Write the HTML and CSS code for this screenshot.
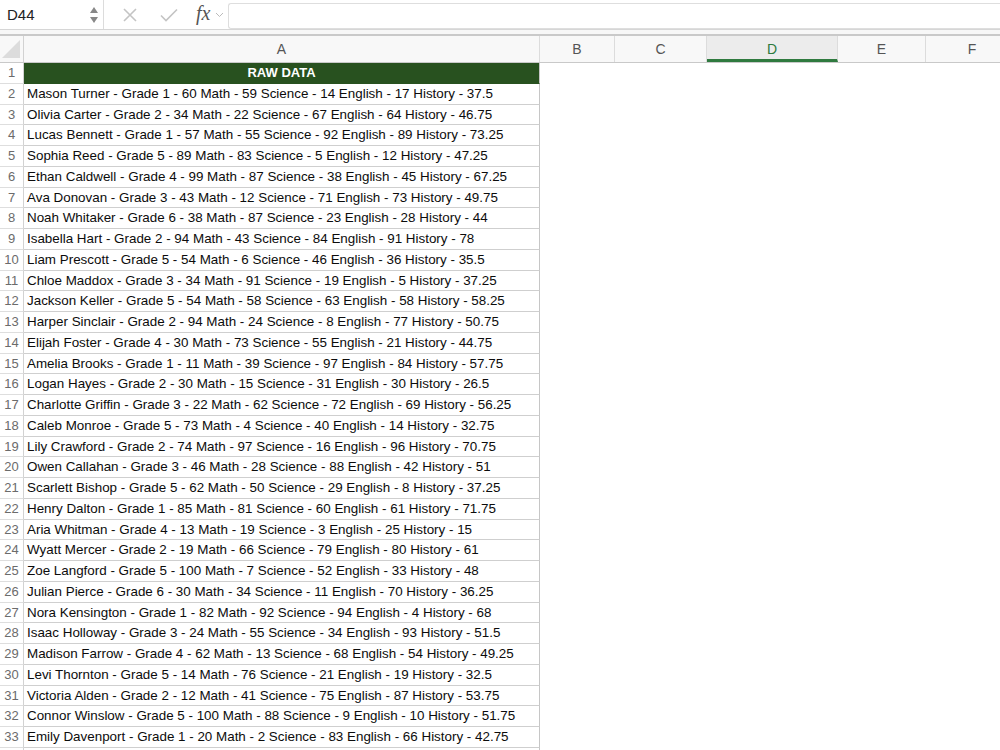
FILE: index.html
```html
<!DOCTYPE html>
<html lang="en">
<head>
<meta charset="UTF-8">
<title>RAW DATA - Sheet</title>
<link rel="stylesheet" href="styles.css">
</head>
<body>
<div class="formula-bar">
  <div class="name-box">
    <span class="name-text">D44</span>
    <span class="spinner">
      <svg width="10" height="22" viewBox="0 0 10 22"><path d="M5 3 L9 9 L1 9 Z" fill="#888"/><path d="M5 19 L9 13 L1 13 Z" fill="#888"/></svg>
    </span>
  </div>
  <div class="fx-tools">
    <svg class="tool" width="16" height="16" viewBox="0 0 16 16"><path d="M2 2 L14 14 M14 2 L2 14" stroke="#c4c4c4" stroke-width="1.6" fill="none"/></svg>
    <svg class="tool" width="18" height="16" viewBox="0 0 18 16"><path d="M1 8.5 L6 13.5 L17 2.5" stroke="#c4c4c4" stroke-width="1.6" fill="none"/></svg>
    <span class="fx">fx</span>
    <svg class="chev" width="9" height="6" viewBox="0 0 9 6"><path d="M1 1 L4.5 4.5 L8 1" stroke="#bbb" stroke-width="1" fill="none"/></svg>
  </div>
  <div class="formula-input"></div>
</div>
<div class="bar-gap"></div>

<div class="sheet">
  <div class="row col-heads">
    <div class="rh corner"><span class="tri"></span></div>
    <div class="ch col-a">A</div>
    <div class="ch col-b">B</div>
    <div class="ch col-c">C</div>
    <div class="ch col-d active">D</div>
    <div class="ch col-e">E</div>
    <div class="ch col-f">F</div>
  </div>
  <div class="row"><div class="rh">1</div><div class="cell col-a title">RAW DATA</div><div class="rest"></div></div>
  <div class="row"><div class="rh">2</div><div class="cell col-a">Mason Turner - Grade 1 - 60 Math - 59 Science - 14 English - 17 History - 37.5</div><div class="rest"></div></div>
  <div class="row"><div class="rh">3</div><div class="cell col-a">Olivia Carter - Grade 2 - 34 Math - 22 Science - 67 English - 64 History - 46.75</div><div class="rest"></div></div>
  <div class="row"><div class="rh">4</div><div class="cell col-a">Lucas Bennett - Grade 1 - 57 Math - 55 Science - 92 English - 89 History - 73.25</div><div class="rest"></div></div>
  <div class="row"><div class="rh">5</div><div class="cell col-a">Sophia Reed - Grade 5 - 89 Math - 83 Science - 5 English - 12 History - 47.25</div><div class="rest"></div></div>
  <div class="row"><div class="rh">6</div><div class="cell col-a">Ethan Caldwell - Grade 4 - 99 Math - 87 Science - 38 English - 45 History - 67.25</div><div class="rest"></div></div>
  <div class="row"><div class="rh">7</div><div class="cell col-a">Ava Donovan - Grade 3 - 43 Math - 12 Science - 71 English - 73 History - 49.75</div><div class="rest"></div></div>
  <div class="row"><div class="rh">8</div><div class="cell col-a">Noah Whitaker - Grade 6 - 38 Math - 87 Science - 23 English - 28 History - 44</div><div class="rest"></div></div>
  <div class="row"><div class="rh">9</div><div class="cell col-a">Isabella Hart - Grade 2 - 94 Math - 43 Science - 84 English - 91 History - 78</div><div class="rest"></div></div>
  <div class="row"><div class="rh">10</div><div class="cell col-a">Liam Prescott - Grade 5 - 54 Math - 6 Science - 46 English - 36 History - 35.5</div><div class="rest"></div></div>
  <div class="row"><div class="rh">11</div><div class="cell col-a">Chloe Maddox - Grade 3 - 34 Math - 91 Science - 19 English - 5 History - 37.25</div><div class="rest"></div></div>
  <div class="row"><div class="rh">12</div><div class="cell col-a">Jackson Keller - Grade 5 - 54 Math - 58 Science - 63 English - 58 History - 58.25</div><div class="rest"></div></div>
  <div class="row"><div class="rh">13</div><div class="cell col-a">Harper Sinclair - Grade 2 - 94 Math - 24 Science - 8 English - 77 History - 50.75</div><div class="rest"></div></div>
  <div class="row"><div class="rh">14</div><div class="cell col-a">Elijah Foster - Grade 4 - 30 Math - 73 Science - 55 English - 21 History - 44.75</div><div class="rest"></div></div>
  <div class="row"><div class="rh">15</div><div class="cell col-a">Amelia Brooks - Grade 1 - 11 Math - 39 Science - 97 English - 84 History - 57.75</div><div class="rest"></div></div>
  <div class="row"><div class="rh">16</div><div class="cell col-a">Logan Hayes - Grade 2 - 30 Math - 15 Science - 31 English - 30 History - 26.5</div><div class="rest"></div></div>
  <div class="row"><div class="rh">17</div><div class="cell col-a">Charlotte Griffin - Grade 3 - 22 Math - 62 Science - 72 English - 69 History - 56.25</div><div class="rest"></div></div>
  <div class="row"><div class="rh">18</div><div class="cell col-a">Caleb Monroe - Grade 5 - 73 Math - 4 Science - 40 English - 14 History - 32.75</div><div class="rest"></div></div>
  <div class="row"><div class="rh">19</div><div class="cell col-a">Lily Crawford - Grade 2 - 74 Math - 97 Science - 16 English - 96 History - 70.75</div><div class="rest"></div></div>
  <div class="row"><div class="rh">20</div><div class="cell col-a">Owen Callahan - Grade 3 - 46 Math - 28 Science - 88 English - 42 History - 51</div><div class="rest"></div></div>
  <div class="row"><div class="rh">21</div><div class="cell col-a">Scarlett Bishop - Grade 5 - 62 Math - 50 Science - 29 English - 8 History - 37.25</div><div class="rest"></div></div>
  <div class="row"><div class="rh">22</div><div class="cell col-a">Henry Dalton - Grade 1 - 85 Math - 81 Science - 60 English - 61 History - 71.75</div><div class="rest"></div></div>
  <div class="row"><div class="rh">23</div><div class="cell col-a">Aria Whitman - Grade 4 - 13 Math - 19 Science - 3 English - 25 History - 15</div><div class="rest"></div></div>
  <div class="row"><div class="rh">24</div><div class="cell col-a">Wyatt Mercer - Grade 2 - 19 Math - 66 Science - 79 English - 80 History - 61</div><div class="rest"></div></div>
  <div class="row"><div class="rh">25</div><div class="cell col-a">Zoe Langford - Grade 5 - 100 Math - 7 Science - 52 English - 33 History - 48</div><div class="rest"></div></div>
  <div class="row"><div class="rh">26</div><div class="cell col-a">Julian Pierce - Grade 6 - 30 Math - 34 Science - 11 English - 70 History - 36.25</div><div class="rest"></div></div>
  <div class="row"><div class="rh">27</div><div class="cell col-a">Nora Kensington - Grade 1 - 82 Math - 92 Science - 94 English - 4 History - 68</div><div class="rest"></div></div>
  <div class="row"><div class="rh">28</div><div class="cell col-a">Isaac Holloway - Grade 3 - 24 Math - 55 Science - 34 English - 93 History - 51.5</div><div class="rest"></div></div>
  <div class="row"><div class="rh">29</div><div class="cell col-a">Madison Farrow - Grade 4 - 62 Math - 13 Science - 68 English - 54 History - 49.25</div><div class="rest"></div></div>
  <div class="row"><div class="rh">30</div><div class="cell col-a">Levi Thornton - Grade 5 - 14 Math - 76 Science - 21 English - 19 History - 32.5</div><div class="rest"></div></div>
  <div class="row"><div class="rh">31</div><div class="cell col-a">Victoria Alden - Grade 2 - 12 Math - 41 Science - 75 English - 87 History - 53.75</div><div class="rest"></div></div>
  <div class="row"><div class="rh">32</div><div class="cell col-a">Connor Winslow - Grade 5 - 100 Math - 88 Science - 9 English - 10 History - 51.75</div><div class="rest"></div></div>
  <div class="row"><div class="rh">33</div><div class="cell col-a">Emily Davenport - Grade 1 - 20 Math - 2 Science - 83 English - 66 History - 42.75</div><div class="rest"></div></div>
  <div class="row"><div class="rh"></div><div class="cell col-a"></div><div class="rest"></div></div>
</div>
</body>
</html>
```

FILE: styles.css
```css
body { margin: 0; background: #fff; font-family: "Liberation Sans", Arial, sans-serif; overflow: hidden; }

/* formula bar */
.formula-bar { display: flex; align-items: center; height: 29px; background: #fff; }
.name-box { width: 104px; height: 29px; display: flex; align-items: center; justify-content: space-between; padding: 0 4px 0 7px; box-sizing: border-box; border-right: 1px solid #dcdcdc; }
.name-text { font-size: 15px; color: #222; }
.spinner { display: flex; }
.fx-tools { display: flex; align-items: center; width: 124px; padding-left: 18px; box-sizing: border-box; }
.fx-tools .tool { margin-right: 22px; }
.fx-tools .tool + .tool { margin-right: 18px; }
.fx { font-family: "Liberation Serif", serif; font-style: italic; font-size: 20px; color: #555; margin-top: -3px; }
.chev { margin-left: 5px; }
.formula-input { flex: 1; height: 24px; border: 1px solid #dedede; border-right: none; border-radius: 3px 0 0 3px; margin-top: 2px; }
.bar-gap { height: 4px; border-top: 1px solid #d6d6d6; border-bottom: 2px solid #c9c9c9; background: #f7f7f7; }

/* grid */
.sheet { display: flex; flex-direction: column; }
.row { display: flex; height: 20.75px; box-sizing: border-box; }
.rh { width: 24px; flex: none; box-sizing: border-box; border-right: 1px solid #d2d2d2; border-bottom: 1px solid #dedede; font-size: 13px; color: #6b6b6b; text-align: center; line-height: 20px; background: #fff; }
.col-a { width: 516px; }
.col-b { width: 75px; }
.col-c { width: 92px; }
.col-d { width: 131px; }
.col-e { width: 88px; }
.cell { flex: none; box-sizing: border-box; border-right: 1px solid #c6c6c6; border-bottom: 1px solid #cfcfcf; font-size: 13.4px; color: #0c0c0c; line-height: 20px; padding-left: 3px; white-space: nowrap; overflow: hidden; }
.cell.title { background: #28511f; color: #fff; font-weight: bold; font-size: 13px; text-align: center; border-bottom-color: #28511f; padding-left: 0; }
.rest { flex: 1; }

.row.col-heads { height: 27px; background: #f8f8f8; border-bottom: 1px solid #c9c9c9; }
.ch { flex: none; box-sizing: border-box; border-right: 1px solid #dcdcdc; font-size: 14px; color: #555; text-align: center; line-height: 26px; }
.ch.col-f { flex: 1; border-right: none; padding-left: 18px; }
.ch.active { background: #ececec; color: #2d7a3e; border-bottom: 3px solid #2f7a3f; }
.rh.corner { position: relative; background: #f8f8f8; border-bottom: none; }
.tri { position: absolute; right: 3px; bottom: 4px; width: 0; height: 0; border-left: 18px solid transparent; border-bottom: 18px solid #dcdcdc; }
```
